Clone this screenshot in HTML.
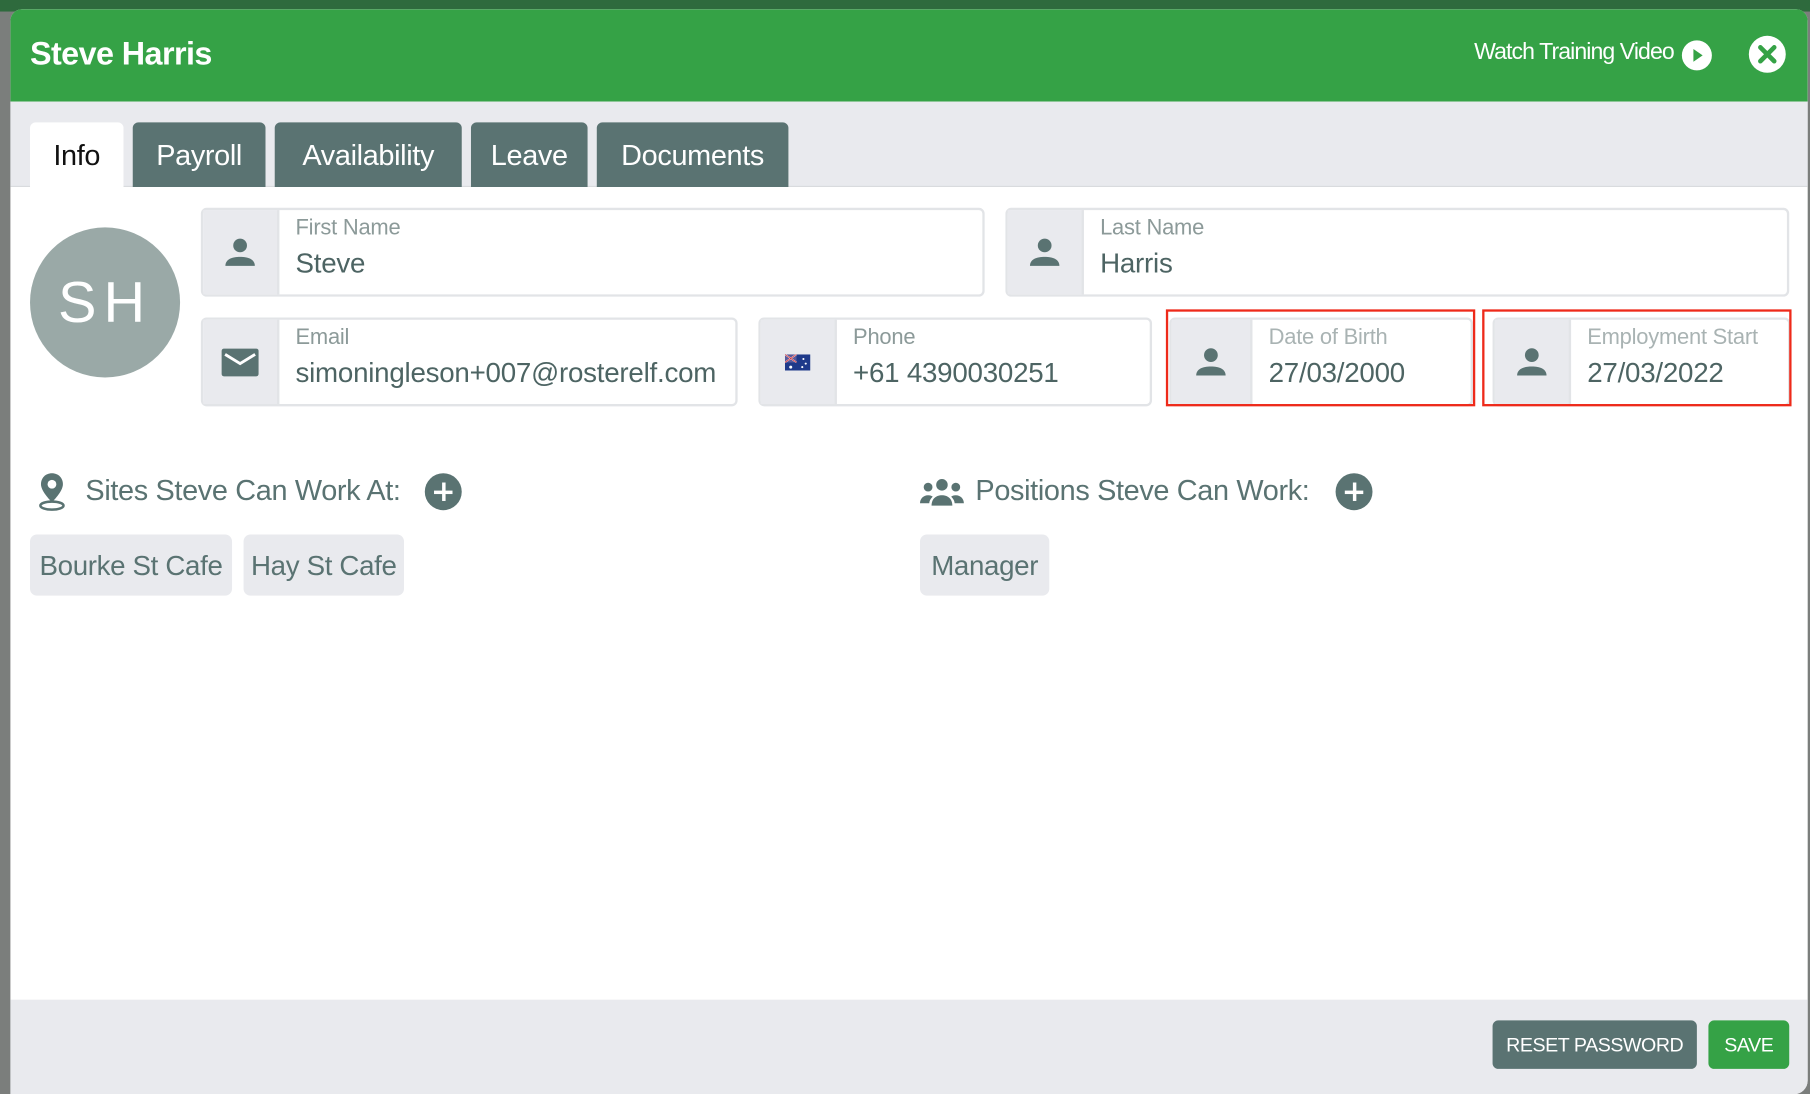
<!DOCTYPE html>
<html><head><meta charset="utf-8"><style>
*{box-sizing:border-box;margin:0;padding:0}
html,body{width:1810px;height:1088px;overflow:hidden;background:#7b7e7c;font-family:"Liberation Sans",sans-serif}
#s{position:absolute;left:0;top:0;width:1568px;height:943px;transform:scale(1.15434);transform-origin:0 0}
.bgtop{position:absolute;left:0;top:0;width:1568px;height:10px;background:#2e6a3d}
.modal{position:absolute;left:9px;top:8px;width:1557px;height:940px;background:#fff;border-radius:10px 10px 12px 0;overflow:hidden}
.hdr{position:absolute;left:0;top:0;right:0;height:80px;background:#35a246}
.title{position:absolute;left:17px;top:23px;color:#fff;font-weight:bold;font-size:28px;letter-spacing:-0.5px}
.watch{position:absolute;right:116px;top:26px;color:#fff;font-size:20px;letter-spacing:-0.8px}
.tabbar{position:absolute;left:0;top:80px;right:0;height:74px;background:#e9eaee;border-bottom:1px solid #d9dbde}
.tab{position:absolute;top:18px;height:56px;background:#5a7372;color:#fff;font-size:25px;border-radius:5px 5px 0 0;text-align:center;line-height:58px;letter-spacing:-0.3px}
.tab.on{background:#fff;color:#111}
.av{position:absolute;left:17px;top:189px;width:130px;height:130px;border-radius:50%;background:#9aa9a7;color:#fff;font-size:50px;font-weight:300;text-align:center;line-height:130px;letter-spacing:6px}
.f{position:absolute;height:77px;border:2px solid #e2e4e7;border-radius:5px;background:#fff}
.f .ic{position:absolute;left:0;top:0;bottom:0;width:66px;background:#e9eaee;border-right:2px solid #e2e4e7}
.f .ic svg{position:absolute;left:50%;top:50%;transform:translate(-50%,-50%)}
.f .l{position:absolute;left:80px;top:5px;font-size:19px;color:#8c9a99;white-space:nowrap;letter-spacing:-0.2px}
.f .v{position:absolute;left:80px;top:33px;font-size:24px;color:#4d6463;white-space:nowrap;letter-spacing:-0.2px}
.red{position:absolute;border:2px solid #ee2a1a}
.sec{position:absolute;top:403px;font-size:25px;color:#5a7372;white-space:nowrap;letter-spacing:-0.3px}
.plus{position:absolute;width:32px;height:32px;border-radius:50%;background:#5a7372}
.plus:before,.plus:after{content:"";position:absolute;background:#fff;left:8px;top:14.5px;width:16px;height:3px}
.plus:after{left:14.5px;top:8px;width:3px;height:16px}
.chip{position:absolute;top:455px;height:53px;background:#e9eaee;border-radius:6px;color:#5a7372;font-size:24px;line-height:55px;text-align:center;letter-spacing:-0.3px}
.foot{position:absolute;left:0;right:0;top:858px;height:90px;background:#e9eaee}
.btn{position:absolute;top:18px;height:42px;border-radius:5px;color:#fff;font-size:17px;line-height:43px;text-align:center;letter-spacing:-0.4px}
</style></head><body><div id="s">
<div class="bgtop"></div>
<div class="modal">
 <div class="hdr">
  <div class="title">Steve Harris</div>
  <div class="watch">Watch Training Video</div>
  <svg style="position:absolute;left:1447px;top:26px" width="28" height="28" viewBox="0 0 28 28"><circle cx="14" cy="14" r="13" fill="#fff"/><path d="M11 8.5 L19 14 L11 19.5Z" fill="#35a246"/></svg>
  <svg style="position:absolute;left:1505px;top:22px" width="34" height="34" viewBox="0 0 34 34"><circle cx="17" cy="17" r="16" fill="#fff"/><path d="M11 11 L23 23 M23 11 L11 23" stroke="#35a246" stroke-width="4" stroke-linecap="round"/></svg>
 </div>
 <div class="tabbar">
  <div class="tab on" style="left:17px;width:81px">Info</div>
  <div class="tab" style="left:106px;width:115px">Payroll</div>
  <div class="tab" style="left:229px;width:162px">Availability</div>
  <div class="tab" style="left:399px;width:101px">Leave</div>
  <div class="tab" style="left:508px;width:166px">Documents</div>
 </div>
 <div class="av">SH</div>

 <div class="f" style="left:165px;top:172px;width:679px"><div class="ic"><svg width="34" height="34" viewBox="0 0 24 24"><circle cx="12" cy="7.5" r="4.2" fill="#5a7372"/><path d="M3 20c0-4 4-5.5 9-5.5s9 1.5 9 5.5z" fill="#5a7372"/></svg></div><div class="l">First Name</div><div class="v">Steve</div></div>
 <div class="f" style="left:862px;top:172px;width:679px"><div class="ic"><svg width="34" height="34" viewBox="0 0 24 24"><circle cx="12" cy="7.5" r="4.2" fill="#5a7372"/><path d="M3 20c0-4 4-5.5 9-5.5s9 1.5 9 5.5z" fill="#5a7372"/></svg></div><div class="l">Last Name</div><div class="v">Harris</div></div>

 <div class="f" style="left:165px;top:267px;width:465px"><div class="ic"><svg width="34" height="26" viewBox="0 0 34 26"><rect x="1" y="1" width="32" height="24" rx="2" fill="#5a7372"/><path d="M4 6 L17 14 L30 6" stroke="#fff" stroke-width="2.5" fill="none"/></svg></div><div class="l">Email</div><div class="v">simoningleson+007@rosterelf.com</div></div>
 <div class="f" style="left:648px;top:267px;width:341px"><div class="ic"><svg width="22" height="14" viewBox="0 0 22 14"><rect width="22" height="14" fill="#1f3a8a"/><rect width="10" height="7" fill="#5a5a9a"/><path d="M0 0L10 7M10 0L0 7" stroke="#fff" stroke-width="1.2"/><path d="M0 0L10 7M10 0L0 7" stroke="#d22" stroke-width=".6"/><circle cx="5" cy="11" r="1.3" fill="#fff"/><circle cx="16" cy="4" r=".9" fill="#fff"/><circle cx="18" cy="8" r=".9" fill="#fff"/><circle cx="15" cy="11" r=".9" fill="#fff"/></svg></div><div class="l">Phone</div><div class="v">+61 4390030251</div></div>
 <div class="f" style="left:1004px;top:267px;width:263px"><div class="ic" style="width:70px"><svg width="34" height="34" viewBox="0 0 24 24"><circle cx="12" cy="7.5" r="4.2" fill="#5a7372"/><path d="M3 20c0-4 4-5.5 9-5.5s9 1.5 9 5.5z" fill="#5a7372"/></svg></div><div class="l" style="left:84px;color:#a9b3b3">Date of Birth</div><div class="v" style="left:84px">27/03/2000</div></div>
 <div class="f" style="left:1284px;top:267px;width:258px"><div class="ic" style="width:66px"><svg width="34" height="34" viewBox="0 0 24 24"><circle cx="12" cy="7.5" r="4.2" fill="#5a7372"/><path d="M3 20c0-4 4-5.5 9-5.5s9 1.5 9 5.5z" fill="#5a7372"/></svg></div><div class="l" style="color:#a9b3b3">Employment Start</div><div class="v">27/03/2022</div></div>
 <div class="red" style="left:1001px;top:260px;width:268px;height:84px"></div>
 <div class="red" style="left:1275px;top:260px;width:268px;height:84px"></div>

 <svg style="position:absolute;left:22px;top:400px" width="28" height="36" viewBox="0 0 28 36"><path d="M14 2C8.5 2 4.5 6 4.5 11.5 4.5 18 14 27 14 27S23.5 18 23.5 11.5C23.5 6 19.5 2 14 2z" fill="#5a7372"/><circle cx="14" cy="11.5" r="3.8" fill="#fff"/><ellipse cx="14" cy="30" rx="10" ry="3.5" fill="none" stroke="#5a7372" stroke-width="2.2"/></svg>
 <div class="sec" style="left:65px">Sites Steve Can Work At:</div>
 <div class="plus" style="left:359px;top:402px"></div>
 <svg style="position:absolute;left:787px;top:406px" width="40" height="26" viewBox="0 0 40 26"><circle cx="20" cy="6" r="5" fill="#5a7372"/><circle cx="8" cy="8" r="3.8" fill="#5a7372"/><circle cx="32" cy="8" r="3.8" fill="#5a7372"/><path d="M11 24c0-6 4-9 9-9s9 3 9 9z" fill="#5a7372"/><path d="M1 22c0-4 3-7 7-7 2 0 3 .5 4 1.2-2 2-3 4-3 5.8z" fill="#5a7372"/><path d="M39 22c0-4-3-7-7-7-2 0-3 .5-4 1.2 2 2 3 4 3 5.8z" fill="#5a7372"/></svg>
 <div class="sec" style="left:836px">Positions Steve Can Work:</div>
 <div class="plus" style="left:1148px;top:402px"></div>

 <div class="chip" style="left:17px;width:175px">Bourke St Cafe</div>
 <div class="chip" style="left:202px;width:139px">Hay St Cafe</div>
 <div class="chip" style="left:788px;width:112px">Manager</div>

 <div class="foot">
  <div class="btn" style="left:1284px;width:177px;background:#5a7372">RESET PASSWORD</div>
  <div class="btn" style="left:1471px;width:70px;background:#35a246">SAVE</div>
 </div>
</div>
</div></body></html>
